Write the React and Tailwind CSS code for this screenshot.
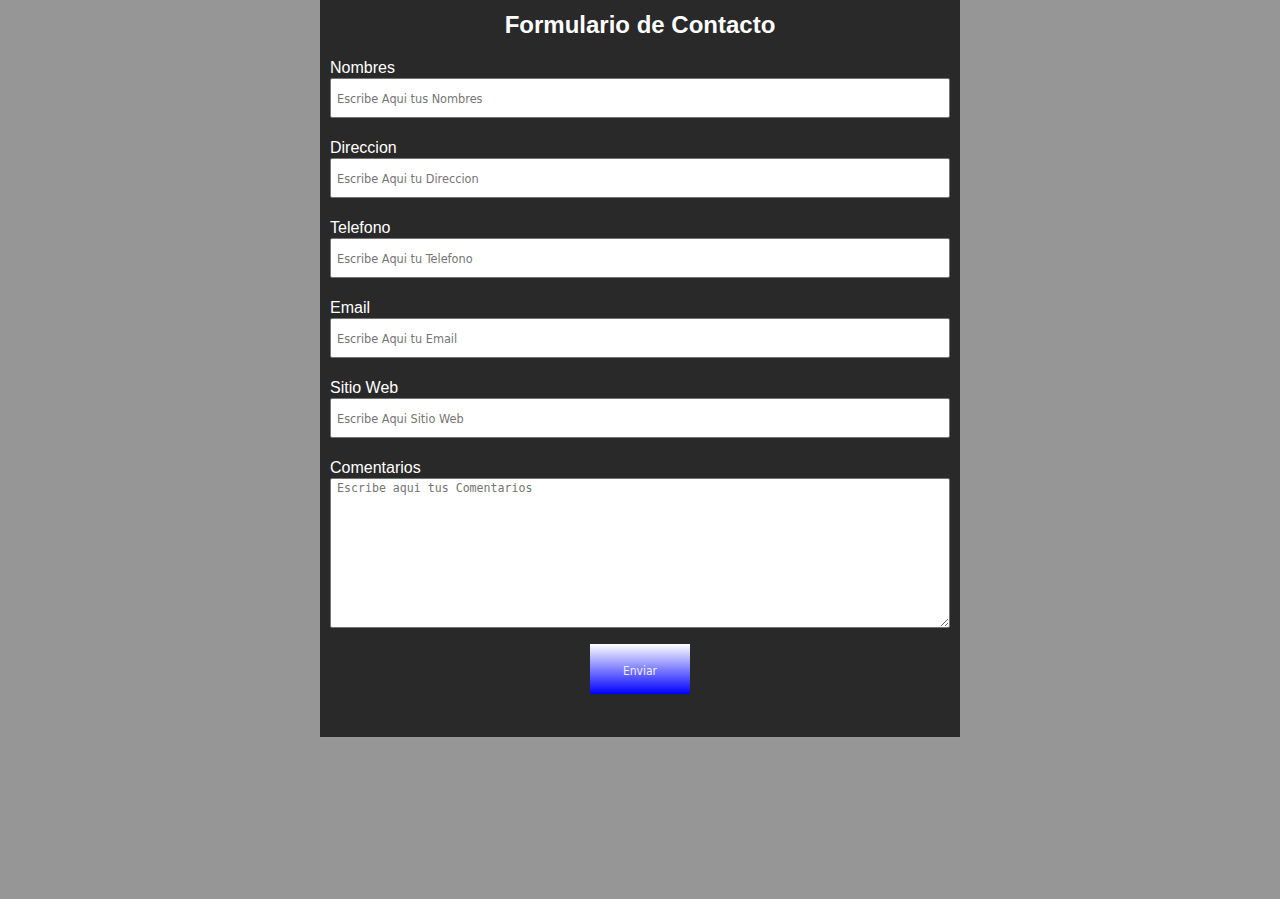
const fields = [
  { label: 'Nombres', placeholder: 'Escribe Aqui tus Nombres' },
  { label: 'Direccion', placeholder: 'Escribe Aqui tu Direccion' },
  { label: 'Telefono', placeholder: 'Escribe Aqui tu Telefono' },
  { label: 'Email', placeholder: 'Escribe Aqui tu Email' },
  { label: 'Sitio Web', placeholder: 'Escribe Aqui Sitio Web' },
];

export default function App() {
  return (
    <div className="min-h-[899px] bg-[#969696] font-['Liberation_Sans',Arial,sans-serif]">
      <form className="mx-auto w-[640px] bg-[#292929] px-[10px] pb-[43px] pt-[11px]">
        <h1 className="mb-[20px] text-center text-[24px] font-bold leading-[28px] text-white">
          Formulario de Contacto
        </h1>

        {fields.map((f) => (
          <div key={f.label} className="mb-[21px]">
            <label className="mb-px block text-[16px] leading-[18px] text-white">{f.label}</label>
            <input
              type="text"
              placeholder={f.placeholder}
              className="block h-[40px] w-full rounded-[2px] border border-[#767676] bg-white px-[6px] pt-px font-['DejaVu_Sans_Condensed','DejaVu_Sans',sans-serif] text-[12.6px] text-black placeholder:text-[#757575]"
            />
          </div>
        ))}

        <div>
          <label className="mb-px block text-[16px] leading-[18px] text-white">Comentarios</label>
          <textarea
            placeholder="Escribe aqui tus Comentarios"
            className="block h-[150px] w-full rounded-[2px] border border-[#767676] bg-white px-[6px] py-[2px] font-['DejaVu_Sans_Mono',monospace] text-[11.6px] leading-[15px] text-black placeholder:text-[#757575]"
          />
        </div>

        <div className="mt-[16px] flex justify-center">
          <button
            type="button"
            className="h-[50px] w-[100px] bg-linear-to-b/srgb from-white to-[#0000ff] pt-[3px] font-['DejaVu_Sans_Condensed','DejaVu_Sans',sans-serif] text-[12px] text-[#f0f0ff]"
          >
            Enviar
          </button>
        </div>
      </form>
    </div>
  );
}
